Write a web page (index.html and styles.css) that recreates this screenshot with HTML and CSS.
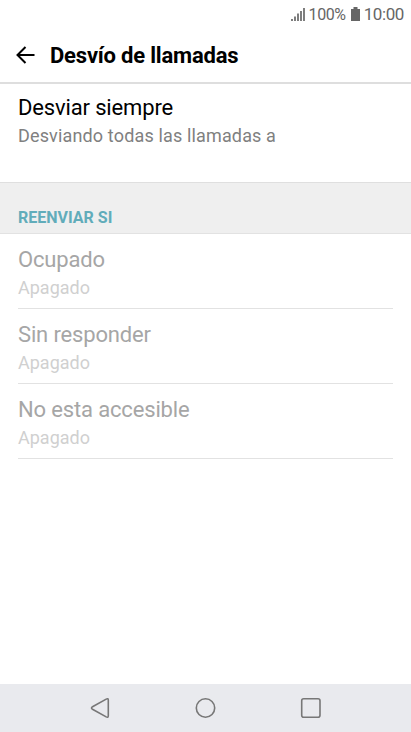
FILE: index.html
```html
<!DOCTYPE html>
<html lang="es">
<head>
<meta charset="utf-8">
<title>Desvío de llamadas</title>
<link rel="stylesheet" href="styles.css">
</head>
<body>
<div class="screen">
  <div class="status">
    <svg class="signal" width="14" height="14" viewBox="0 0 14 14"><path d="M1 12v2M4 9.500v4.500M7 6.500v7.500M10 4v10M13 1v13" stroke="#707070" stroke-width="1.800"/></svg>
    <span class="percent">100%</span>
    <svg class="battery" width="9" height="14" viewBox="0 0 9 14"><path d="M2.500 0h4v2H9v12H0V2h2.500z" fill="#666"/></svg>
    <span class="clock">10:00</span>
  </div>
  <header class="header">
    <svg class="back" width="20" height="18" viewBox="0 0 20 18"><path d="M18.500 9H2M9.500 1L1.500 9l8 8" fill="none" stroke="#000" stroke-width="2"/></svg>
    <h1 class="title">Desvío de llamadas</h1>
  </header>
  <main class="content">
    <section class="item always"><div class="name">Desviar siempre</div><div class="detail">Desviando todas las llamadas a</div></section>
    <h2 class="section">REENVIAR SI</h2>
    <section class="item off"><div class="name">Ocupado</div><div class="detail">Apagado</div></section>
    <section class="item off"><div class="name">Sin responder</div><div class="detail">Apagado</div></section>
    <section class="item off"><div class="name">No esta accesible</div><div class="detail">Apagado</div></section>
  </main>
  <nav class="nav">
    <svg width="24" height="24" viewBox="0 0 24 24"><path d="M18.200 3.100Q20.300 2 20.300 4.200V19.800Q20.300 22 18.200 20.900L4.500 13.200Q2.500 12 4.500 10.800Z"/></svg>
    <svg width="24" height="24" viewBox="0 0 24 24"><circle cx="11.500" cy="12" r="9.200"/></svg>
    <svg width="24" height="24" viewBox="0 0 24 24"><rect x="2.700" y="2.800" width="18.300" height="18.400" rx="2"/></svg>
  </nav>
</div>
</body>
</html>
```
FILE: styles.css
```css
* { box-sizing: border-box; }
body { margin: 0; font-family: Roboto, sans-serif; background: #fff; }
.screen { width: 411px; height: 732px; display: flex; flex-direction: column; overflow: hidden; }
.status { height: 28px; display: flex; justify-content: flex-end; align-items: center; padding-right: 7px; color: #666; }
.percent { font-size: 16px; letter-spacing: -0.4px; margin-left: 4px; }
.battery { margin-left: 5px; }
.clock { font-size: 17px; letter-spacing: -0.4px; margin-left: 4px; }
.header { height: 56px; display: flex; align-items: center; padding-left: 16px; border-bottom: 2px solid #dedede; }
.back { margin-bottom: 1px; }
.title { margin: 2px 0 0 14px; font-size: 22px; font-weight: 700; line-height: 28px; letter-spacing: -0.2px; }
.content { flex: 1; }
.item { height: 75px; padding-top: 12px; margin: 0 18px; }
.name { font-size: 22px; line-height: 28px; letter-spacing: -0.15px; color: #000; }
.detail { font-size: 18px; line-height: 28px; color: #808080; }
.always { height: 98px; padding-top: 10px; }
.always .detail { letter-spacing: 0.15px; }
.off { border-bottom: 1px solid #e2e2e2; }
.off .name { color: #a6a6a6; }
.off .detail { color: #d0d0d0; }
.section { height: 52px; margin: 0; padding: 25px 18px 0; background: #efefef; border-top: 1px solid #dfdfdf; border-bottom: 1px solid #e2e2e2; color: #61acba; font-size: 16px; line-height: 20px; font-weight: 700; }
.nav { height: 48px; background: #e9eaee; display: flex; justify-content: space-between; padding: 12px 88px; }
.nav svg { fill: none; stroke: #777; stroke-width: 1.6; }
```
